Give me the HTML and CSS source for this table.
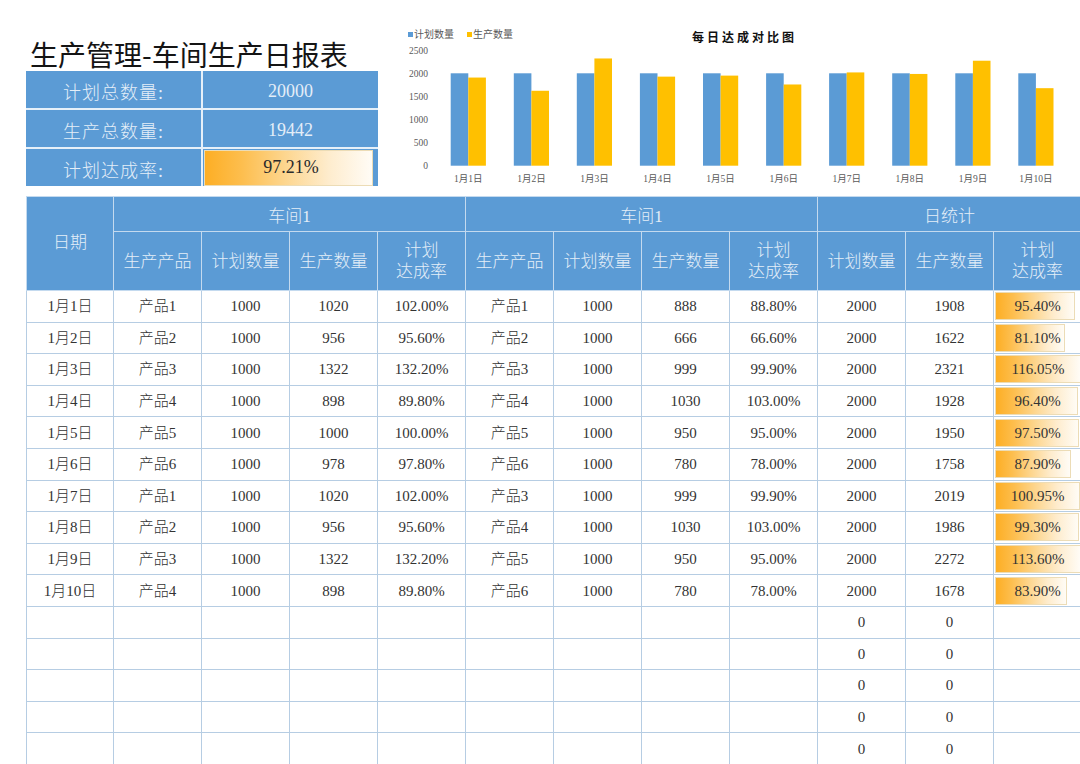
FILE: index.html
```html
<!DOCTYPE html>
<html lang="zh-CN">
<head>
<meta charset="utf-8">
<title>生产管理-车间生产日报表</title>
<link rel="stylesheet" href="styles.css">
</head>
<body>
<div class="page">
  <div class="top">
    <div class="left">
      <h1 class="title">生产管理-车间生产日报表</h1>
      <div class="summary">
        <div class="k">计划总数量:</div><div class="v">20000</div>
        <div class="k">生产总数量:</div><div class="v">19442</div>
        <div class="k">计划达成率:</div>
        <div class="v rate"><div class="dbw big"><div class="bar" style="width:169px"></div><span>97.21%</span></div></div>
      </div>
    </div>
    <svg class="chart" width="695" height="196" viewBox="0 0 695 196">
      <g class="legend">
        <rect x="23" y="32" width="5" height="5" fill="#5b9bd5"/>
        <text x="29" y="38">计划数量</text>
        <rect x="82" y="32" width="5" height="5" fill="#ffc000"/>
        <text x="88" y="38">生产数量</text>
      </g>
      <text class="ctitle" x="307" y="42">每日达成对比图</text>
      <g class="ylab">
        <text x="43" y="53.5">2500</text>
        <text x="43" y="76.6">2000</text>
        <text x="43" y="99.7">1500</text>
        <text x="43" y="122.8">1000</text>
        <text x="43" y="145.9">500</text>
        <text x="43" y="169">0</text>
      </g>
      <g fill="#5b9bd5">
        <rect x="65.7" y="73.3" width="17.6" height="92.4"/>
        <rect x="128.8" y="73.3" width="17.6" height="92.4"/>
        <rect x="191.8" y="73.3" width="17.6" height="92.4"/>
        <rect x="254.9" y="73.3" width="17.6" height="92.4"/>
        <rect x="318.0" y="73.3" width="17.6" height="92.4"/>
        <rect x="381.1" y="73.3" width="17.6" height="92.4"/>
        <rect x="444.1" y="73.3" width="17.6" height="92.4"/>
        <rect x="507.2" y="73.3" width="17.6" height="92.4"/>
        <rect x="570.3" y="73.3" width="17.6" height="92.4"/>
        <rect x="633.3" y="73.3" width="17.6" height="92.4"/>
      </g>
      <g fill="#ffc000">
        <rect x="83.3" y="77.55" width="17.6" height="88.15"/>
        <rect x="146.4" y="90.76" width="17.6" height="74.94"/>
        <rect x="209.4" y="58.47" width="17.6" height="107.23"/>
        <rect x="272.5" y="76.63" width="17.6" height="89.07"/>
        <rect x="335.6" y="75.61" width="17.6" height="90.09"/>
        <rect x="398.7" y="84.48" width="17.6" height="81.22"/>
        <rect x="461.7" y="72.42" width="17.6" height="93.28"/>
        <rect x="524.8" y="73.95" width="17.6" height="91.75"/>
        <rect x="587.9" y="60.73" width="17.6" height="104.97"/>
        <rect x="650.9" y="88.18" width="17.6" height="77.52"/>
      </g>
      <g class="xlab">
        <text x="83.3" y="181.5">1月1日</text>
        <text x="146.4" y="181.5">1月2日</text>
        <text x="209.4" y="181.5">1月3日</text>
        <text x="272.5" y="181.5">1月4日</text>
        <text x="335.6" y="181.5">1月5日</text>
        <text x="398.7" y="181.5">1月6日</text>
        <text x="461.7" y="181.5">1月7日</text>
        <text x="524.8" y="181.5">1月8日</text>
        <text x="587.9" y="181.5">1月9日</text>
        <text x="650.9" y="181.5">1月10日</text>
      </g>
    </svg>
  </div>

  <table class="report">
    <colgroup>
      <col class="c0"><col><col><col><col><col><col><col><col><col><col><col>
    </colgroup>
    <thead>
      <tr class="h1">
        <th rowspan="2" class="date-h">日期</th>
        <th colspan="4">车间1</th>
        <th colspan="4">车间1</th>
        <th colspan="3">日统计</th>
      </tr>
      <tr class="h2">
        <th>生产产品</th><th>计划数量</th><th>生产数量</th><th>计划<br>达成率</th>
        <th>生产产品</th><th>计划数量</th><th>生产数量</th><th>计划<br>达成率</th>
        <th>计划数量</th><th>生产数量</th><th>计划<br>达成率</th>
      </tr>
    </thead>
    <tbody>
      <tr><td>1月1日</td><td>产品1</td><td>1000</td><td>1020</td><td>102.00%</td><td>产品1</td><td>1000</td><td>888</td><td>88.80%</td><td>2000</td><td>1908</td><td class="db"><div class="dbw"><div class="bar" style="width:80px"></div><span>95.40%</span></div></td></tr>
      <tr><td>1月2日</td><td>产品2</td><td>1000</td><td>956</td><td>95.60%</td><td>产品2</td><td>1000</td><td>666</td><td>66.60%</td><td>2000</td><td>1622</td><td class="db"><div class="dbw"><div class="bar" style="width:70px"></div><span>81.10%</span></div></td></tr>
      <tr><td>1月3日</td><td>产品3</td><td>1000</td><td>1322</td><td>132.20%</td><td>产品3</td><td>1000</td><td>999</td><td>99.90%</td><td>2000</td><td>2321</td><td class="db"><div class="dbw"><div class="bar" style="width:86px"></div><span>116.05%</span></div></td></tr>
      <tr><td>1月4日</td><td>产品4</td><td>1000</td><td>898</td><td>89.80%</td><td>产品4</td><td>1000</td><td>1030</td><td>103.00%</td><td>2000</td><td>1928</td><td class="db"><div class="dbw"><div class="bar" style="width:83px"></div><span>96.40%</span></div></td></tr>
      <tr><td>1月5日</td><td>产品5</td><td>1000</td><td>1000</td><td>100.00%</td><td>产品5</td><td>1000</td><td>950</td><td>95.00%</td><td>2000</td><td>1950</td><td class="db"><div class="dbw"><div class="bar" style="width:84px"></div><span>97.50%</span></div></td></tr>
      <tr><td>1月6日</td><td>产品6</td><td>1000</td><td>978</td><td>97.80%</td><td>产品6</td><td>1000</td><td>780</td><td>78.00%</td><td>2000</td><td>1758</td><td class="db"><div class="dbw"><div class="bar" style="width:76px"></div><span>87.90%</span></div></td></tr>
      <tr><td>1月7日</td><td>产品1</td><td>1000</td><td>1020</td><td>102.00%</td><td>产品3</td><td>1000</td><td>999</td><td>99.90%</td><td>2000</td><td>2019</td><td class="db"><div class="dbw"><div class="bar" style="width:85px"></div><span>100.95%</span></div></td></tr>
      <tr><td>1月8日</td><td>产品2</td><td>1000</td><td>956</td><td>95.60%</td><td>产品4</td><td>1000</td><td>1030</td><td>103.00%</td><td>2000</td><td>1986</td><td class="db"><div class="dbw"><div class="bar" style="width:84px"></div><span>99.30%</span></div></td></tr>
      <tr><td>1月9日</td><td>产品3</td><td>1000</td><td>1322</td><td>132.20%</td><td>产品5</td><td>1000</td><td>950</td><td>95.00%</td><td>2000</td><td>2272</td><td class="db"><div class="dbw"><div class="bar" style="width:86px"></div><span>113.60%</span></div></td></tr>
      <tr><td>1月10日</td><td>产品4</td><td>1000</td><td>898</td><td>89.80%</td><td>产品6</td><td>1000</td><td>780</td><td>78.00%</td><td>2000</td><td>1678</td><td class="db"><div class="dbw"><div class="bar" style="width:72px"></div><span>83.90%</span></div></td></tr>
      <tr><td></td><td></td><td></td><td></td><td></td><td></td><td></td><td></td><td></td><td>0</td><td>0</td><td></td></tr>
      <tr><td></td><td></td><td></td><td></td><td></td><td></td><td></td><td></td><td></td><td>0</td><td>0</td><td></td></tr>
      <tr><td></td><td></td><td></td><td></td><td></td><td></td><td></td><td></td><td></td><td>0</td><td>0</td><td></td></tr>
      <tr><td></td><td></td><td></td><td></td><td></td><td></td><td></td><td></td><td></td><td>0</td><td>0</td><td></td></tr>
      <tr><td></td><td></td><td></td><td></td><td></td><td></td><td></td><td></td><td></td><td>0</td><td>0</td><td></td></tr>
    </tbody>
  </table>
</div>
</body>
</html>
```

FILE: styles.css
```css
html, body {
  margin: 0;
  padding: 0;
  background: #ffffff;
}

body {
  width: 1080px;
  height: 764px;
  overflow: hidden;
  font-family: "Liberation Serif", "Noto Sans CJK SC", serif;
  color: #333333;
}

.page {
  padding-left: 26px;
}

.top {
  display: flex;
  height: 196px;
}

.left {
  flex: none;
  width: 359px;
  padding-top: 38px;
  box-sizing: border-box;
}

.title {
  margin: 0 0 0 4px;
  font: 400 28px/33px "Noto Sans CJK SC", sans-serif;
  color: #141414;
  white-space: nowrap;
}

.summary {
  display: grid;
  grid-template-columns: 175px 175px;
  grid-auto-rows: 37px;
  gap: 2px;
  width: 352px;
  background: #e6f0f9;
}

.summary .k,
.summary .v {
  background: #5b9bd5;
  color: #e4eef8;
  font-size: 18px;
  font-weight: 300;
  display: flex;
  align-items: center;
  justify-content: center;
  padding-top: 4px;
  box-sizing: border-box;
}

.summary .k {
  letter-spacing: 1px;
  padding-top: 3px;
}

.summary .v.rate {
  justify-content: flex-start;
  align-items: stretch;
  padding-top: 0;
}

.chart {
  flex: none;
  display: block;
  width: 695px;
  height: 196px;
  font-family: "Liberation Serif", "Noto Sans CJK SC", serif;
}

.legend text {
  font-size: 10px;
  fill: #595959;
}

.ctitle {
  font-family: "Noto Sans CJK SC", sans-serif;
  font-size: 12px;
  font-weight: 700;
  letter-spacing: 3px;
  fill: #111111;
}

.ylab text {
  font-size: 9.5px;
  fill: #595959;
  text-anchor: end;
}

.xlab text {
  font-size: 9.5px;
  fill: #595959;
  text-anchor: middle;
}

.report {
  border-collapse: collapse;
  table-layout: fixed;
  width: 1055px;
}

.report col {
  width: 88px;
}

.report col.c0 {
  width: 87px;
}

.report th {
  background: #5b9bd5;
  color: #e4eef8;
  font-family: "Liberation Serif", "Noto Sans CJK SC", serif;
  font-weight: 300;
  font-size: 17px;
  border: 1px solid #c4daef;
  padding: 0;
  text-align: center;
}

.report .h1 th {
  height: 34px;
}

.report .h2 th {
  height: 58px;
  line-height: 21px;
}

.report th.date-h {
  vertical-align: top;
  padding-top: 36px;
  line-height: 20px;
}

.report td {
  height: 30.6px;
  border: 1px solid #b6cde3;
  text-align: center;
  font-size: 15px;
  font-weight: 300;
  line-height: 20px;
  padding: 0;
  white-space: nowrap;
  color: #333333;
}

.report td.db {
  padding: 0;
}

.dbw {
  display: grid;
  height: 28px;
  margin: 0 1px;
}

.dbw .bar {
  grid-area: 1 / 1;
  justify-self: start;
  height: 100%;
  box-sizing: border-box;
  border: 1px solid #ecdcb6;
  background: linear-gradient(90deg, #fdae24 0%, #fdbe4e 22%, #fdd68f 48%, #feeccd 74%, #fffcf6 100%);
}

.dbw span {
  grid-area: 1 / 1;
  place-self: center;
  color: #333333;
}

.dbw.big {
  height: 36px;
  width: 100%;
  margin: 0 0 0 1px;
  align-self: center;
}

.dbw.big span {
  font-size: 18px;
  color: #2a2a2a;
}
```
